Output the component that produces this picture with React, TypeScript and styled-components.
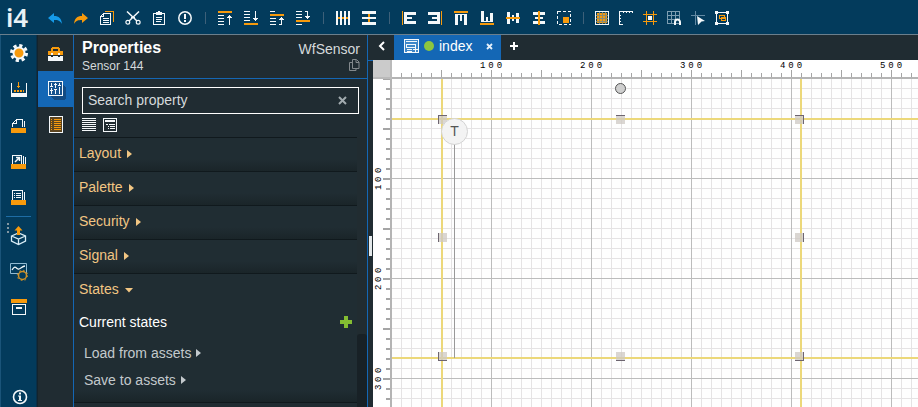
import React, { useEffect, useState } from "react";
import styled, { createGlobalStyle } from "styled-components";

const c = {
  navy: "#033b5c",
  dark: "#202c32",
  blue: "#1467b5",
  orange: "#f79a0c",
  white: "#f4f8fa",
  sand: "#f2c683",
  grey: "#b4b4b4",
  guide: "#ecd87a",
};

const GlobalStyle = createGlobalStyle`
  *, *::before, *::after { box-sizing: border-box; }
  body { margin: 0; background: ${c.dark}; color: #d5dadc; font: 14px/18px "Liberation Sans", Arial, sans-serif; }
  button, input { font: inherit; color: inherit; }
  button { border: 0; padding: 0; background: none; cursor: pointer; }
  h1, h2, p { margin: 0; font-size: inherit; font-weight: inherit; }
  svg { display: block; flex: none; }
`;

const Shell = styled.div`
  display: flex;
  flex-direction: column;
  height: 100vh;
  overflow: hidden;
`;
const Toolbar = styled.header`
  display: flex;
  align-items: center;
  flex: none;
  height: 35px;
  background: ${c.navy};
  border-bottom: 1px solid #6b7f8c;
`;
const Logo = styled.div`
  width: 42px;
  flex: none;
  padding-left: 6px;
  font: 600 26px/34px "Noto Sans", sans-serif;
  color: #e9f1f5;
`;
const ToolGroup = styled.div`
  display: flex;
  flex: none;
  padding-top: 2px;
`;
const ToolButton = styled.button<{ $compact?: boolean }>`
  display: flex;
  justify-content: center;
  width: ${(p) => (p.$compact ? 24 : 26)}px;
`;
const Divider = styled.span`
  width: 1px;
  height: 12px;
  margin: 2px 6px 0 7px;
  background: #3d6079;
  flex: none;
`;
const Body = styled.div`
  display: flex;
  flex: 1;
  min-height: 0;
`;
const Rail = styled.nav<{ $dark?: boolean }>`
  display: flex;
  flex-direction: column;
  flex: none;
  width: 37px;
  background: ${(p) => (p.$dark ? c.dark : c.navy)};
  border-left: ${(p) => (p.$dark ? "1px solid #14242d" : "1px solid #1a5479")};
  border-right: ${(p) => (p.$dark ? `1px solid ${c.blue}` : "1px solid #0a2f48")};
`;
const RailButton = styled.button<{ $active?: boolean }>`
  display: flex;
  align-items: center;
  justify-content: center;
  flex: none;
  height: 36px;
  background: ${(p) => (p.$active ? c.blue : "transparent")};
`;
const RailLine = styled.span`
  flex: none;
  height: 1px;
  margin: 1px 5px 0;
  background: #1e6da5;
`;
const RailEnd = styled.div`
  display: flex;
  flex-direction: column;
  margin-top: auto;
  margin-bottom: -8px;
  padding-left: 2px;
`;
const Panel = styled.aside`
  display: flex;
  flex-direction: column;
  flex: none;
  width: 294px;
  border-right: 1px solid ${c.blue};
`;
const PanelHead = styled.div`
  display: flex;
  justify-content: space-between;
  height: 44px;
  flex: none;
  padding: 4px 7px 0 8px;
  border-bottom: 1px solid ${c.blue};
`;
const HeadColumn = styled.div<{ $end?: boolean }>`
  display: flex;
  flex-direction: column;
  align-items: ${(p) => (p.$end ? "flex-end" : "flex-start")};
  padding-top: ${(p) => (p.$end ? 1 : 0)}px;
`;
const Title = styled.h1`
  && { font: bold 16px/18px "Liberation Sans", Arial, sans-serif; }
  color: #fff;
`;
const Subtitle = styled.p`
  && { font-size: 12px; }
`;
const SearchBox = styled.label`
  display: flex;
  align-items: center;
  height: 27px;
  flex: none;
  margin: 8px 8px 4px;
  padding: 0 11px 1px 5px;
  border: 1px solid #fff;
`;
const SearchInput = styled.input`
  flex: 1;
  min-width: 0;
  border: 0;
  padding: 0;
  background: none;
  outline: 0;
  &::placeholder { color: #d5dadc; opacity: 1; }
`;
const ViewRow = styled.div`
  display: flex;
  align-items: flex-start;
  gap: 7px;
  flex: none;
  height: 19px;
  padding-left: 8px;
`;
const Scroller = styled.div`
  display: flex;
  flex: 1;
  min-height: 0;
`;
const Sections = styled.div`
  flex: 1;
  overflow: hidden;
  border-top: 1px solid #10191d;
`;
const ScrollTrack = styled.div`
  display: flex;
  flex: none;
  width: 10px;
  padding-top: 197px;
  background: #212c31;
`;
const ScrollThumb = styled.div`
  flex: 1;
  background: #182126;
  border-radius: 3px 3px 0 0;
`;
const Section = styled.section`
  border-bottom: 1px solid #10191d;
  background: linear-gradient(#202d33, #202d33) top / 100% calc(100% - 12px) no-repeat,
    linear-gradient(#202d33, #1a2529) bottom / 100% 12px no-repeat;
`;
const SectionToggle = styled.button`
  display: flex;
  align-items: center;
  gap: 6px;
  width: 100%;
  height: 33px;
  padding: 0 5px 3px;
  color: ${c.sand};
`;
const StatesBody = styled.div`
  display: flex;
  flex-direction: column;
  padding: 1px 5px 9px;
`;
const StatesHead = styled.div`
  display: flex;
  align-items: center;
  justify-content: space-between;
  height: 28px;
  color: #fff;
`;
const StateAction = styled.button`
  display: flex;
  align-items: center;
  gap: 5px;
  height: 27px;
  padding-left: 5px;
  color: #c3c9cc;
  &:first-of-type { margin-top: 3px; }
`;
const Splitter = styled.div`
  display: flex;
  align-items: center;
  justify-content: center;
  flex: none;
  width: 5px;
  margin-top: 25px;
  border-top: 1px solid ${c.blue};
  &::after { content: ""; width: 3px; height: 20px; margin-top: 24px; background: #e3e8ea; }
`;
const Workspace = styled.main`
  display: flex;
  flex-direction: column;
  flex: 1;
  min-width: 0;
`;
const Tabs = styled.div`
  display: flex;
  flex: none;
  height: 25px;
  margin-left: -5px;
`;
const TabEdge = styled.button`
  display: flex;
  align-items: center;
  justify-content: center;
  width: 26px;
  padding-bottom: 3px;
`;
const Tab = styled.div`
  display: flex;
  align-items: center;
  gap: 5px;
  width: 107px;
  padding: 0 8px 3px 10px;
  background: ${c.blue};
  color: #fff;
`;
const TabDot = styled.span`
  width: 10px;
  height: 10px;
  border-radius: 50%;
  background: #8cc63f;
`;
const TabClose = styled.button`
  margin-left: auto;
`;
const Board = styled.div`
  display: grid;
  grid-template: 19px 1fr / 19px 1fr;
  flex: 1;
  min-height: 0;
  background: #fff;
`;
const Corner = styled.div`
  background: #cbcbcb;
  border-right: 2px solid #bababa;
  border-bottom: 2px solid #bababa;
`;
const TopRuler = styled.div`
  display: flex;
  overflow: hidden;
  padding: 2px 0 0 49px;
  border-bottom: 2px solid ${c.grey};
  background:
    repeating-linear-gradient(90deg, #a5a5a5 0 1px, transparent 1px 50px) -1px 10px / 3000px 7px no-repeat,
    repeating-linear-gradient(90deg, #a5a5a5 0 1px, transparent 1px 10px) -1px 13px / 3000px 4px no-repeat;
`;
const LeftRuler = styled.div`
  display: flex;
  flex-direction: column;
  overflow: hidden;
  padding: 50px 0 0 2px;
  border-right: 2px solid ${c.grey};
  background:
    repeating-linear-gradient(#a5a5a5 0 2px, transparent 2px 50px) 10px -1px / 7px 3000px no-repeat,
    repeating-linear-gradient(#a5a5a5 0 2px, transparent 2px 10px) 13px -1px / 4px 3000px no-repeat;
`;
const RulerLabel = styled.div<{ $vertical?: boolean }>`
  display: flex;
  flex: none;
  justify-content: center;
  gap: 3px;
  ${(p) =>
    p.$vertical
      ? "height: 100px; width: 8px; writing-mode: vertical-rl; transform: rotate(180deg);"
      : "width: 100px; height: 8px;"}
  font: 9px/8px "Liberation Mono", monospace;
  color: #000;
`;
const Canvas = styled.div`
  position: relative;
  overflow: hidden;
  background:
    repeating-linear-gradient(90deg, #bcbcbc 0 1px, transparent 1px 100px) -1px 0 / 3000px 100% no-repeat,
    repeating-linear-gradient(#bcbcbc 0 1px, transparent 1px 100px) 0 -1px / 100% 3000px no-repeat,
    repeating-linear-gradient(90deg, #e5e3e4 0 1px, transparent 1px 10px) -1px 0 / 3000px 100% no-repeat,
    repeating-linear-gradient(#e5e3e4 0 1px, transparent 1px 10px) 0 -1px / 100% 3000px no-repeat,
    #fefefe;
`;
const VerticalGuide = styled.span<{ $at: number }>`
  position: absolute;
  top: 0;
  bottom: 0;
  left: ${(p) => p.$at}px;
  width: 2px;
  background: ${c.guide};
`;
const HorizontalGuide = styled.span<{ $at: number }>`
  position: absolute;
  left: 0;
  right: 0;
  top: ${(p) => p.$at}px;
  height: 2px;
  background: ${c.guide};
`;
const Handle = styled.span<{ $x: number; $y: number; $sides: string }>`
  position: absolute;
  left: ${(p) => p.$x}px;
  top: ${(p) => p.$y}px;
  width: 9px;
  height: 9px;
  background: rgba(205, 200, 195, 0.75);
  border: 0 solid #6d6570;
  ${(p) => p.$sides.split(" ").map((s) => `border-${s}-width: 1px;`).join("")}
`;
const RotateKnob = styled.span`
  position: absolute;
  left: 223px;
  top: 4px;
  width: 11px;
  height: 11px;
  border: 1px solid #555;
  border-radius: 50%;
  background: #cfcfcf;
`;
const Stem = styled.span`
  position: absolute;
  left: 62px;
  top: 65px;
  width: 1px;
  height: 214px;
  background: #999;
`;
const SensorNode = styled.div`
  position: absolute;
  left: 49px;
  top: 39px;
  width: 27px;
  height: 27px;
  border: 1px solid #d3d3d3;
  border-radius: 50%;
  background: #f3f3f3;
  color: #555;
  text-align: center;
  line-height: 25px;
`;

const Px = ({ children, w = 14, h = 14, crisp = true }: { children: React.ReactNode; w?: number; h?: number; crisp?: boolean }) => (
  <svg width={w} height={h} viewBox={`0 0 ${w} ${h}`} fill="none" stroke={c.white} shapeRendering={crisp ? "crispEdges" : "auto"} aria-hidden="true">
    {children}
  </svg>
);
const W = ({ d }: { d: string }) => <path d={d} fill={c.white} stroke="none" />;
const O = ({ d }: { d: string }) => <path d={d} fill={c.orange} stroke="none" />;

const arrow = "M0 6L6 1v3C11 4 13.500 6.500 14 12 12 8.500 10 8 6 8v3z";
const editTools: [string, React.ReactNode][] = [
  ["Undo", <Px crisp={false}><path d={arrow} transform="translate(0 1)" fill="#159ae8" stroke="none" /></Px>],
  ["Redo", <Px crisp={false}><path d={arrow} transform="matrix(-1 0 0 1 14 1)" fill={c.orange} stroke="none" /></Px>],
  ["Copy", <Px><path d="M4.500 .5h9v10" stroke={c.orange} /><path d="M3.500 2.500h7v11H.5V5.500zM3.500 2.500v3h-3" /><path d="M3 7.500h6M3 9.500h6M3 11.500h6" /></Px>],
  ["Cut", <Px w={16} crisp={false}><path d="M2 .5L12 10M14 .5L4 10" strokeWidth="1.500" /><circle cx="2.800" cy="11.300" r="1.900" strokeWidth="1.200" /><circle cx="13.200" cy="11.300" r="1.900" strokeWidth="1.200" /><path d="M6 6.500h4" /></Px>],
  ["Paste", <Px><path d="M1.500 2.500h11v11h-11z" /><W d="M4 1h2V0h2v1h2v3H4z" /><path d="M4 6.500h6M4 8.500h6M4 10.500h5" /></Px>],
  ["Problems", <Px crisp={false}><circle cx="7" cy="7" r="6.200" strokeWidth="1.500" /><W d="M6 3h2v5H6zM6 9h2v2H6z" /></Px>],
];
const orderTools: [string, React.ReactNode][] = [
  ["Bring to front", <Px><O d="M0 0h14v2H0z" /><W d="M0 4h6v1H0zM0 7h6v1H0zM0 10h6v1H0zM0 13h6v1H0zM11 4h1v10h-1zM10 5h3v1h-3zM9 6h5v1H9z" /></Px>],
  ["Send to back", <Px><O d="M0 12h14v2H0z" /><W d="M0 0h6v1H0zM0 3h6v1H0zM0 6h6v1H0zM0 9h6v1H0zM11 0h1v10h-1zM10 8h3v1h-3zM9 7h5v1H9z" /></Px>],
  ["Bring forward", <Px><O d="M0 3h14v2H0z" /><W d="M0 0h5v1H0zM0 7h6v1H0zM0 10h6v1H0zM0 13h6v1H0zM11 6h1v7h-1zM10 7h3v1h-3zM9 8h5v1H9zM9 13h3v1H9z" /></Px>],
  ["Send backward", <Px><O d="M0 9h14v2H0z" /><W d="M0 0h6v1H0zM0 3h6v1H0zM0 6h6v1H0zM0 13h6v1H0zM11 1h1v7h-1zM10 6h3v1h-3zM9 5h5v1H9zM9 0h3v1H9z" /></Px>],
];
const spreadTools: [string, React.ReactNode][] = [
  ["Distribute horizontally", <Px><O d="M0 6h14v2H0z" /><W d="M0 0h2v14H0zM4 0h2v14H4zM8 0h2v14H8zM12 0h2v14h-2z" /></Px>],
  ["Distribute vertically", <Px><W d="M0 0h14v3H0zM0 6h14v2H0zM0 11h14v3H0z" /><O d="M6 3h2v3H6zM6 8h2v3H6z" /></Px>],
];
const alignTools: [string, React.ReactNode][] = [
  ["Align left", <Px><O d="M0 0h1v14H0z" /><W d="M2 1h12v3H2zM2 6h8v2H2zM2 10h12v3H2zM2 1h3v12H2z" /></Px>],
  ["Align right", <Px><O d="M13 0h1v14h-1z" /><W d="M0 1h12v3H0zM4 6h8v2H4zM0 10h12v3H0zM9 1h3v12H9z" /></Px>],
  ["Align top", <Px><O d="M0 0h14v2H0z" /><W d="M1 3h3v11H1zM6 3h2v7H6zM10 3h3v11h-3zM1 3h12v1H1z" /></Px>],
  ["Align bottom", <Px><O d="M0 12h14v2H0z" /><W d="M1 0h3v11H1zM6 6h2v5H6zM10 2h3v9h-3zM1 10h12v1H1z" /></Px>],
  ["Align middle", <Px><W d="M1 1h3v12H1zM6 4h2v6H6zM10 2h3v10h-3z" /><O d="M0 6h14v2H0z" /></Px>],
  ["Align center", <Px><W d="M1 1h12v3H1zM3 6h8v2H3zM1 10h12v3H1z" /><O d="M6 0h2v14H6z" /></Px>],
];
const selectTool: [string, React.ReactNode][] = [
  ["Select area", <Px><path d="M.5.5h13v13H.5z" strokeDasharray="3 2" /><O d="M6 6h6v6H6z" /></Px>],
];
const gridTools: [string, React.ReactNode][] = [
  ["Show grid", <Px><path d="M.5.5h13v13H.5z" /><O d="M2 2h10v10H2z" /><path d="M4.500 1v12M7.500 1v12M10.500 1v12M1 4.500h12M1 7.500h12M1 10.500h12" stroke="#8a8b71" /></Px>],
  ["Show rulers", <Px><path d="M0 .5h14M.5 0v14M1 4.500h1M1 7.500h1M1 10.500h1M1 13.500h3M4.500 1v1M7.500 1v1M10.500 1v1M13.500 1v1" /></Px>],
  ["Show guides", <Px><path d="M3.500 0v14M10.500 0v14M0 3.500h14M0 10.500h14" stroke={c.orange} /><W d="M5 5h4v4H5z" /></Px>],
  ["Snap to grid", <Px><path d="M.5.5h12v12H.5zM4.500 0v13M8.500 0v13M0 4.500h13M0 8.500h13" stroke="#7d9db1" /><path d="M8 14v-3a2.500 2.500 0 0 1 5 0v3" strokeWidth="2" shapeRendering="auto" /></Px>],
  ["Snap to guides", <Px><path d="M4.500 0v14M0 4.500h14" stroke="#6289a3" /><path d="M6 5l8 5-3.500.5L7 14z" fill={c.white} stroke="none" shapeRendering="auto" /></Px>],
  ["Snap to objects", <Px><path d="M1.500 1.500h11v11h-11z" /><path d="M4.500 4.500h5v3h-5zM6.500 6.500h4v3h-4z" stroke={c.orange} /><W d="M0 0h3v3H0zM11 0h3v3h-3zM0 11h3v3H0zM11 11h3v3h-3z" /></Px>],
];

const Tools = ({ items, compact }: { items: [string, React.ReactNode][]; compact?: boolean }) => (
  <ToolGroup>
    {items.map(([label, icon]) => (
      <ToolButton key={label} type="button" aria-label={label} $compact={compact}>{icon}</ToolButton>
    ))}
  </ToolGroup>
);

const tray = <O d="M0 10h15v5H0z" />;
const mainRail: [string, React.ReactNode][] = [
  ["Settings", <Px w={18} h={18} crisp={false}><circle cx="9" cy="9" r="7.500" strokeWidth="3" strokeDasharray="3.200 2.690" /><circle cx="9" cy="9" r="5.500" fill={c.orange} strokeWidth="2" /></Px>],
  ["Import", <Px w={16} h={16}><path d="M.5 2v13M15.500 2v13" /><W d="M0 12h16v4H0z" /><O d="M7 1h1v6H7zM6 5h3v1H6zM3 9h2v2H3zM6 9h2v2H6zM9 9h2v2H9zM12 9h1v2h-1z" /></Px>],
  ["Projects", <Px w={15} h={15}>{tray}<path d="M1.500 9V5.500l4-4h6V9M1.500 5.500h4v-4M13.500 3v6" /></Px>],
  ["Shortcuts", <Px w={15} h={15}>{tray}<path d="M1.500 10V1.500h9V10M12.500 2v8M14.500 3v7" /><path d="M4 8l4-4M5 3.500h3.500V7" shapeRendering="auto" strokeWidth="1.500" /></Px>],
  ["Documents", <Px w={15} h={15}>{tray}<path d="M1.500 10V.5h10V10M13.500 2v8M3 3.500h1M5 3.500h5M3 5.500h1M5 5.500h5M3 7.500h1M5 7.500h5" /></Px>],
];
const lowerRail: [string, React.ReactNode][] = [
  ["Publish", (
    <Px w={35} h={24} crisp={false}>
      <g transform="translate(0 2)">
        <path d="M10.500 11l7-3 7 3v5l-7 3.500-7-3.500zM10.500 11l7 3 7-3M17.500 14v5" strokeWidth="1.300" stroke="#d9edf6" />
        <O d="M17.500 1l4 4.500h-2.500V10h-3V5.500h-2.500z" />
      </g>
      <path d="M7 0v2M7 4v2M7 8v2" stroke="#8397a2" strokeWidth="2" />
    </Px>
  )],
  ["Monitoring", <Px w={18} h={19} crisp={false}><path d="M.5 1.500h16v10H.5z" stroke="#91bad2" /><path d="M2 8c3-5 4-2 6-1s4-3 7-3" strokeWidth="1.300" /><circle cx="12.500" cy="13.500" r="4" fill={c.navy} stroke="#d19226" strokeWidth="1.500" /><circle cx="12.500" cy="13.500" r="5.200" stroke="#d19226" strokeDasharray="1.600 2.480" /></Px>],
  ["Archive", <Px w={16} h={16}><O d="M0 0h16v4H0z" /><path d="M1.500 5.500h13v10h-13z" /><W d="M5 8h6v2H5z" /></Px>],
];
const RailItems = ({ items }: { items: [string, React.ReactNode][] }) => (
  <>
    {items.map(([label, icon]) => (
      <RailButton key={label} type="button" aria-label={label}>{icon}</RailButton>
    ))}
  </>
);

const CaretRight = () => <svg width="5" height="9" viewBox="0 0 5 9" fill="currentColor" aria-hidden="true"><path d="M0 1l5 4-5 4z" /></svg>;
const CaretDown = () => <svg width="8" height="7" viewBox="0 0 8 7" fill="currentColor" aria-hidden="true"><path d="M0 2h8L4 6.500z" /></svg>;

/* Multiples of 100 whose label fits wholly inside a ruler of the given length. */
const marksFor = (length: number) =>
  Array.from({ length: Math.max(0, Math.floor((length - 12) / 100)) }, (_, i) => (i + 1) * 100);

const useWindowSize = () => {
  const read = () => ({ width: window.innerWidth, height: window.innerHeight });
  const [size, setSize] = useState(read);
  useEffect(() => {
    const update = () => setSize(read());
    window.addEventListener("resize", update);
    return () => window.removeEventListener("resize", update);
  }, []);
  return size;
};

const RulerLabels = ({ length, vertical }: { length: number; vertical?: boolean }) => (
  <>
    {marksFor(length).map((m) => (
      <RulerLabel key={m} $vertical={vertical}>
        {String(m).split("").map((digit, i) => <span key={i}>{digit}</span>)}
      </RulerLabel>
    ))}
  </>
);
const handles: [number, number, string][] = [
  [46, 36, "top left"], [224, 36, "top"], [403, 36, "top right"],
  [46, 154, "left"], [403, 154, "right"],
  [46, 273, "bottom left"], [224, 273, "bottom"], [403, 273, "bottom right"],
];

export default function App() {
  const { width, height } = useWindowSize();
  return (
    <Shell>
      <GlobalStyle />
      <Toolbar>
        <Logo>i4</Logo>
        <Tools items={editTools} />
        <Divider />
        <Tools items={orderTools} />
        <Divider />
        <Tools items={spreadTools} />
        <Divider />
        <Tools items={alignTools} />
        <Tools items={selectTool} compact />
        <Divider />
        <Tools items={gridTools} compact />
      </Toolbar>
      <Body>
        <Rail aria-label="Main">
          <RailItems items={mainRail} />
          <RailLine />
          <RailItems items={lowerRail} />
          <RailEnd>
            <RailButton type="button" aria-label="About">
              <Px w={16} h={16} crisp={false}><circle cx="8" cy="8" r="6.500" strokeWidth="1.600" /><W d="M7 3.500h2v2H7zM6 6.500h3v4.500h1v1H6v-1h1V7.500H6z" /></Px>
            </RailButton>
          </RailEnd>
        </Rail>
        <Rail $dark aria-label="Tools">
          <RailButton type="button" aria-label="Toolbox">
            <Px w={15} h={15}><O d="M4 1h7v1h1v3h3v4H0V5h3V2h1zM5 3v2h5V3z" /><W d="M0 10h3v1h2v-1h5v1h2v-1h3v5H0zM3 7h2v2H3zM10 7h2v2h-2z" /></Px>
          </RailButton>
          <RailButton type="button" aria-label="Properties" $active>
            <Px w={24} h={24}><path d="M19 7l3 4v10l-2 2H10l-4-4z" fill="#124b83" stroke="none" /><path d="M4.500 4.500h14v14h-14z" fill="#17548f" /><path d="M7.500 6v3M7.500 11v6M11.500 6v5M11.500 13v4M15.500 6v2M15.500 10v7M6 9.500h3M10 12.500h3M14 8.500h3M6 13.500h3M10 7.500h3" /></Px>
          </RailButton>
          <RailButton type="button" aria-label="Outline">
            <Px w={14} h={18}><path d="M.5.5h13v16H.5z" fill="#5c4520" /><path d="M5 3.500h7M5 5.500h7M5 7.500h7M5 9.500h7M5 11.500h7M5 13.500h7M2 3.500h1M2 5.500h1M2 7.500h1M2 9.500h1M2 11.500h1M2 13.500h1" stroke={c.orange} /></Px>
          </RailButton>
        </Rail>
        <Panel>
          <PanelHead>
            <HeadColumn>
              <Title>Properties</Title>
              <Subtitle>Sensor 144</Subtitle>
            </HeadColumn>
            <HeadColumn $end>
              <span>WfSensor</span>
              <button type="button" aria-label="Copy name">
                <svg width="12" height="14" viewBox="0 0 12 14" fill="none" stroke="#83898d" aria-hidden="true"><path d="M4.500 1.500h4l2.500 2.500v6.500H4.500zM8 2v2.500h3M4 4.500H1.500v8H8V11" /></svg>
              </button>
            </HeadColumn>
          </PanelHead>
          <SearchBox>
            <SearchInput type="text" placeholder="Search property" aria-label="Search property" />
            <button type="button" aria-label="Clear search">
              <svg width="9" height="9" viewBox="0 0 9 9" stroke="#a2abaf" strokeWidth="2" aria-hidden="true"><path d="M1 1l7 7M8 1L1 8" /></svg>
            </button>
          </SearchBox>
          <ViewRow>
            <button type="button" aria-label="Flat list"><Px><path d="M0 .5h14M0 2.500h14M0 4.500h14M0 6.500h14M0 8.500h14M0 10.500h14M0 12.500h14" /></Px></button>
            <button type="button" aria-label="Grouped list"><Px><path d="M.5.5h13v13H.5z" /><W d="M2 2h10v2H2zM3 6h2v1H3zM6 6h6v1H6zM5 8h1v1H5zM7 8h5v1H7zM5 10h1v1H5zM7 10h5v1H7z" /></Px></button>
          </ViewRow>
          <Scroller>
            <Sections>
              {["Layout", "Palette", "Security", "Signal"].map((name) => (
                <Section key={name}>
                  <SectionToggle type="button" aria-expanded="false">{name}<CaretRight /></SectionToggle>
                </Section>
              ))}
              <Section>
                <SectionToggle type="button" aria-expanded="true">States<CaretDown /></SectionToggle>
                <StatesBody>
                  <StatesHead>
                    <h2>Current states</h2>
                    <button type="button" aria-label="Add state">
                      <svg width="12" height="12" viewBox="0 0 12 12" fill="#84bd32" aria-hidden="true"><path d="M4 0h4v4h4v4H8v4H4V8H0V4h4z" /></svg>
                    </button>
                  </StatesHead>
                  <StateAction type="button">Load from assets<CaretRight /></StateAction>
                  <StateAction type="button">Save to assets<CaretRight /></StateAction>
                </StatesBody>
              </Section>
            </Sections>
            <ScrollTrack><ScrollThumb /></ScrollTrack>
          </Scroller>
        </Panel>
        <Splitter />
        <Workspace>
          <Tabs>
            <TabEdge type="button" aria-label="Collapse panel">
              <svg width="7" height="10" viewBox="0 0 7 10" fill="none" stroke="#fff" strokeWidth="2" aria-hidden="true"><path d="M6 1L2 5l4 4" /></svg>
            </TabEdge>
            <Tab>
              <Px w={15} h={14}><path d="M.5.5h14v13H.5z" fill="#3d86c8" /><path d="M2 2.500h11M2.500 5.500h9v3h-9zM3 10.500h5M3 12.500h5" /><W d="M11 8h1v2h2v1h-2v2h-1v-2H9v-1h2z" /></Px>
              <TabDot />
              <span>index</span>
              <TabClose type="button" aria-label="Close index">
                <svg width="7" height="7" viewBox="0 0 7 7" stroke="#e5f0fa" strokeWidth="1.800" aria-hidden="true"><path d="M1 1l5 5M6 1L1 6" /></svg>
              </TabClose>
            </Tab>
            <TabEdge type="button" aria-label="New tab">
              <svg width="8" height="8" viewBox="0 0 8 8" fill="#fff" aria-hidden="true"><path d="M3 0h2v3h3v2H5v3H3V5H0V3h3z" /></svg>
            </TabEdge>
          </Tabs>
          <Board>
            <Corner />
            <TopRuler><RulerLabels length={width - 391} /></TopRuler>
            <LeftRuler><RulerLabels length={height - 78} vertical /></LeftRuler>
            <Canvas>
              <VerticalGuide $at={49} />
              <VerticalGuide $at={408} />
              <HorizontalGuide $at={39} />
              <HorizontalGuide $at={278} />
              <Stem />
              {handles.map(([x, y, sides]) => <Handle key={`${x}-${y}`} $x={x} $y={y} $sides={sides} />)}
              <RotateKnob />
              <SensorNode>T</SensorNode>
            </Canvas>
          </Board>
        </Workspace>
      </Body>
    </Shell>
  );
}
